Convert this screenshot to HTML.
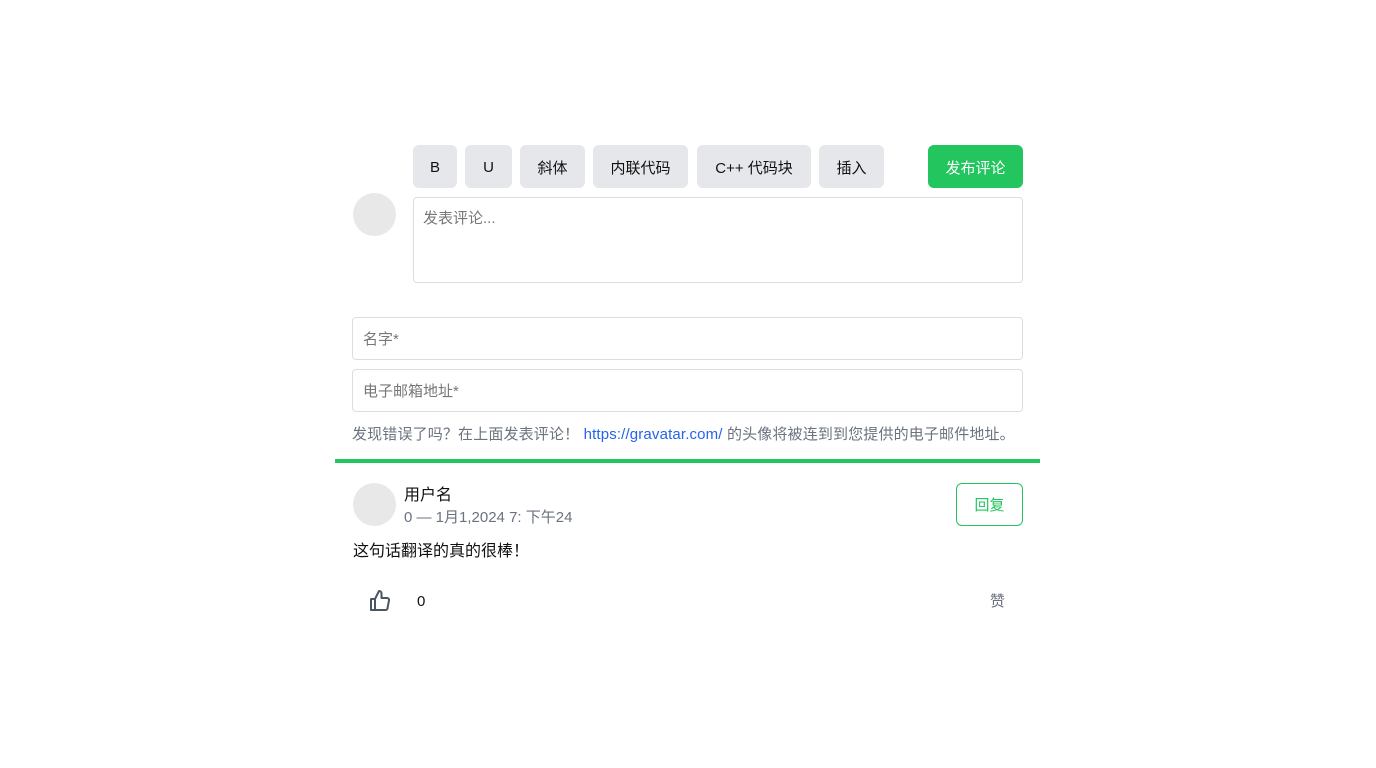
<!DOCTYPE html>
<html><head><meta charset="utf-8"><style>
*{box-sizing:border-box;margin:0;padding:0}
body{width:1376px;height:768px;background:#fff;font-family:"Liberation Sans","Noto Sans CJK SC",sans-serif;font-size:15px;color:#111;position:relative;overflow:hidden}
.a{position:absolute}
.btn{position:absolute;top:145px;height:43px;background:#e5e7eb;border-radius:6px;display:flex;align-items:center;justify-content:center;font-size:15px;color:#111;padding-top:2px}
.av{position:absolute;width:43px;height:43px;border-radius:50%;background:#e8e8e8}
.inp{position:absolute;left:352px;width:671px;height:43px;border:1px solid #ddd;border-radius:4px;padding-left:10px;display:flex;align-items:center;color:#777;font-size:15px}
</style></head><body>
<div class="btn" style="left:413px;width:44px">B</div>
<div class="btn" style="left:465px;width:47px">U</div>
<div class="btn" style="left:520px;width:65px">斜体</div>
<div class="btn" style="left:593px;width:95px">内联代码</div>
<div class="btn" style="left:697px;width:114px">C++ 代码块</div>
<div class="btn" style="left:819px;width:65px">插入</div>
<div class="btn" style="left:928px;width:95px;background:#22c55e;color:#fff">发布评论</div>
<div class="av" style="left:353px;top:193px"></div>
<div class="a" style="left:413px;top:197px;width:610px;height:86px;border:1px solid #ddd;border-radius:4px;padding:9px 9px;color:#777">发表评论...</div>
<div class="inp" style="top:317px">名字*</div>
<div class="inp" style="top:369px">电子邮箱地址*</div>
<div class="a" style="left:352px;top:423px;color:#6b7280;font-size:15px;letter-spacing:0.15px">发现错误了吗？在上面发表评论！ <span style="color:#2563eb">https://gravatar.com/</span> 的头像将被连到到您提供的电子邮件地址。</div>
<div class="a" style="left:335px;top:459px;width:705px;height:4px;background:#22c55e"></div>
<div class="av" style="left:353px;top:483px"></div>
<div class="a" style="left:404px;top:486px;font-size:16px;line-height:20px">用户名</div>
<div class="a" style="left:404px;top:508px;color:#6b7280;line-height:20px">0 — 1月1,2024 7: 下午24</div>
<div class="a" style="left:956px;top:483px;width:67px;height:43px;border:1px solid #22c55e;border-radius:6px;color:#22c55e;display:flex;align-items:center;justify-content:center">回复</div>
<div class="a" style="left:353px;top:542px;font-size:16px;line-height:20px">这句话翻译的真的很棒！</div>
<svg class="a" style="left:368px;top:589px" width="24" height="24" viewBox="0 0 24 24" fill="none" stroke="#4b5563" stroke-width="2" stroke-linejoin="round"><path d="M7 10v11H3V10h4zM7 10l4-8c1.5 0 2.5 1 2.5 2.5V9h5.5a2 2 0 0 1 2 2.3l-1.4 7.5A2 2 0 0 1 17.6 21H7"/></svg>
<div class="a" style="left:417px;top:593px;line-height:18px">0</div>
<div class="a" style="left:990px;top:592px;color:#6b7280;line-height:20px">赞</div>
</body></html>
